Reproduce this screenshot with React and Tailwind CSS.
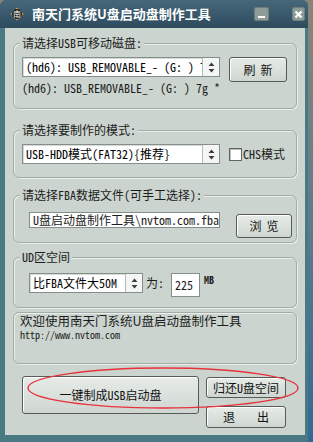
import React from 'react';

function Group({ legend, className, children }) {
  return (
    <div className={`relative mx-[8px] rounded-[6px] border border-[#a3ada7] shadow-[1px_1px_0_#e9eeea,inset_1px_1px_0_#e9eeea] ${className}`}>
      {legend && (
        <span className="absolute -top-[9px] left-[6px] bg-[#cbd4ce] px-[2px] text-[12px] leading-[16px] text-[#1c1c1c]">
          {legend}
        </span>
      )}
      {children}
    </div>
  );
}

function Arrows() {
  return (
    <svg width="7" height="11" viewBox="0 0 7 11">
      <path d="M3.5 0.5 L6.5 4 L0.5 4 Z" fill="#3a3f3c" />
      <path d="M3.5 10.5 L6.5 7 L0.5 7 Z" fill="#3a3f3c" />
    </svg>
  );
}

function Select({ value, className }) {
  return (
    <div className={`flex h-[20px] border border-[#858e89] bg-white shadow-[inset_1px_1px_0_#d6dbd8] ${className}`}>
      <div className="flex-1 overflow-hidden whitespace-nowrap pl-[3px] text-[12px] leading-[18px] text-black">
        {value}
      </div>
      <div className="flex w-[17px] items-center justify-center border-l border-[#b5bcb8] bg-[#f4f6f5]">
        <Arrows />
      </div>
    </div>
  );
}

function Button({ className, children }) {
  return (
    <div className={`flex items-center justify-center rounded-[3px] border border-[#555b57] bg-gradient-to-b from-[#e6ebe8] to-[#cfd6d1] text-[12px] text-[#111] shadow-[inset_1px_1px_0_#ffffff] ${className}`}>
      {children}
    </div>
  );
}

export default function App() {
  return (
    <div className="flex h-[442px] w-[313px] bg-gradient-to-b from-[#8a8576] via-[#5b7c8c] to-[#2f6a95] font-['Noto_Sans_Mono_CJK_SC','Liberation_Mono','Noto_Sans_CJK_SC',monospace]">
      <div className="flex h-full w-[308px] flex-col rounded-t-[6px] bg-[#4a7883] pb-[7px]">
        {/* title bar */}
        <div className="flex h-[28px] items-center rounded-t-[6px] bg-gradient-to-b from-[#46677b] to-[#2e4b5e] pl-[10px] pr-[3px]">
          <svg width="14" height="14" viewBox="0 0 14 14">
            <path d="M7 0.5 L13.5 7 L7 13.5 L0.5 7 Z" fill="#c9a544" />
            <circle cx="7" cy="7" r="5" fill="#1c1c1c" />
            <text x="7" y="10" textAnchor="middle" fontSize="8" fill="#ffffff" fontFamily="Noto Sans CJK SC">南</text>
          </svg>
          <span className="ml-[8px] font-['Noto_Sans_CJK_SC',sans-serif] text-[13px] font-bold leading-[16px] text-white">
            南天门系统U盘启动盘制作工具
          </span>
          <div className="ml-auto flex items-center gap-[23px]">
            <div className="flex h-[14px] w-[15px] items-end justify-center rounded-[3px] bg-[#8d9b99] pb-[3px] shadow-[inset_0_0_0_1px_#6f7e7c]">
              <div className="h-[2px] w-[7px] bg-white" />
            </div>
            <div className="flex h-[14px] w-[13px] items-center justify-center rounded-[3px] bg-[#8d9b99] shadow-[inset_0_0_0_1px_#6f7e7c]">
              <svg width="9" height="9" viewBox="0 0 9 9">
                <path d="M1.5 1.5 L7.5 7.5 M7.5 1.5 L1.5 7.5" stroke="#ffffff" strokeWidth="2.2" />
              </svg>
            </div>
          </div>
        </div>

        {/* client area */}
        <div className="relative ml-[5px] mr-[3px] flex flex-1 flex-col bg-[#cbd4ce] pt-[15px] text-[#1c1c1c]">
          <Group legend="请选择USB可移动磁盘:" className="h-[66px] pl-[8px] pt-[13px]">
            <div className="flex items-start gap-[9px]">
              <Select value="(hd6): USB_REMOVABLE_- (G: ) 7g *" className="w-[198px]" />
              <Button className="h-[25px] w-[58px] gap-[5px]">
                <span>刷</span>
                <span>新</span>
              </Button>
            </div>
            <div className="-mt-[1px] text-[12px] leading-[14px]">(hd6): USB_REMOVABLE_- (G: ) 7g *</div>
          </Group>

          <Group legend="请选择要制作的模式:" className="mt-[21px] h-[48px] pl-[8px] pt-[13px]">
            <div className="flex items-center">
              <Select value="USB-HDD模式(FAT32){推荐}" className="w-[198px]" />
              <div className="ml-[9px] h-[13px] w-[13px] border border-[#5f6662] bg-white shadow-[inset_1px_1px_0_#b9bfbb]" />
              <span className="ml-[1px] text-[12px] leading-[16px]">CHS模式</span>
            </div>
          </Group>

          <Group legend="请选择FBA数据文件(可手工选择):" className="mt-[17px] h-[48px] pl-[15px] pt-[16px]">
            <div className="flex items-start gap-[16px]">
              <div className="h-[16px] w-[191px] overflow-hidden whitespace-nowrap border border-[#858e89] bg-white pl-[3px] text-[12px] leading-[14px]">
                U盘启动盘制作工具\nvtom.com.fba
              </div>
              <Button className="mt-[2px] h-[24px] w-[56px] gap-[5px]">
                <span>浏</span>
                <span>览</span>
              </Button>
            </div>
          </Group>

          <Group legend="UD区空间" className="mt-[14px] h-[51px] pl-[15px] pt-[15px]">
            <div className="flex items-start">
              <Select value="比FBA文件大50M" className="w-[114px]" />
              <span className="ml-[3px] text-[12px] leading-[20px]">为:</span>
              <div className="ml-[7px] h-[24px] w-[29px] border border-[#858e89] bg-white pl-[3px] text-[12px] leading-[22px]">
                225
              </div>
              <span className="ml-[4px] text-[10px] font-bold leading-[14px]">MB</span>
            </div>
          </Group>

          <Group className="mt-[4px] h-[52px] pl-[6px]">
            <div className="font-['Noto_Sans_CJK_SC',sans-serif] text-[12.5px] leading-[16px]">欢迎使用南天门系统U盘启动盘制作工具</div>
            <div className="text-[10px] leading-[12px]">http://www.nvtom.com</div>
          </Group>

          <div className="mt-[12px] flex gap-[7px] pl-[17px]">
            <Button className="h-[38px] w-[177px]">一键制成USB启动盘</Button>
            <div className="flex flex-col gap-[8px] pt-[1px]">
              <Button className="h-[21px] w-[80px]">归还U盘空间</Button>
              <Button className="h-[22px] w-[80px] gap-[22px]">
                <span>退</span>
                <span>出</span>
              </Button>
            </div>
          </div>

          {/* red annotation ellipse */}
          <svg className="pointer-events-none absolute left-0 top-0" width="300" height="407" viewBox="0 0 300 407">
            <ellipse cx="158" cy="360" rx="135" ry="20" fill="none" stroke="#e8323c" strokeWidth="1.4" />
          </svg>
        </div>
      </div>
    </div>
  );
}
